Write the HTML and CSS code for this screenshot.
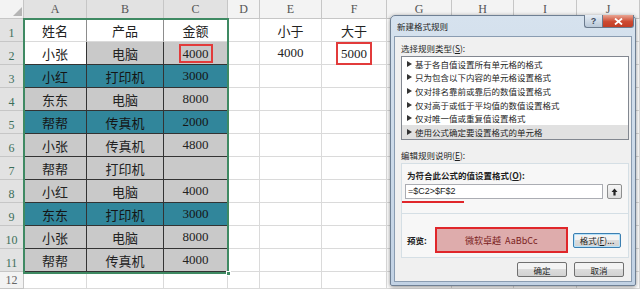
FILE: index.html
```html
<!DOCTYPE html>
<html lang="zh-CN">
<head>
	<meta charset="UTF-8">
	<title>新建格式规则</title>
	<link rel="stylesheet" href="styles.css">
</head>
<body>
	<div class="sheet">
		<div class="grid">
			<div class="corner"><span class="tri"></span></div>
			<div class="ch on">A</div><div class="ch on">B</div><div class="ch on">C</div><div class="ch">D</div><div class="ch">E</div><div class="ch">F</div><div class="ch">G</div><div class="ch">H</div><div class="ch">I</div><div class="ch">J</div>

			<div class="rh on">1</div><div class="c hd">姓名</div><div class="c hd">产品</div><div class="c hd">金额</div><div class="c"></div><div class="c">小于</div><div class="c">大于</div><div class="c"></div><div class="c"></div><div class="c"></div><div class="c"></div>

			<div class="rh on">2</div><div class="c w">小张</div><div class="c g">电脑</div><div class="c g"><span class="mark">4000</span></div><div class="c"></div><div class="c">4000</div><div class="c"><span class="mark big">5000</span></div><div class="c"></div><div class="c"></div><div class="c"></div><div class="c"></div>

			<div class="rh on">3</div><div class="c t">小红</div><div class="c t">打印机</div><div class="c t">3000</div><div class="c"></div><div class="c"></div><div class="c"></div><div class="c"></div><div class="c"></div><div class="c"></div><div class="c"></div>

			<div class="rh on">4</div><div class="c g">东东</div><div class="c g">电脑</div><div class="c g">8000</div><div class="c"></div><div class="c"></div><div class="c"></div><div class="c"></div><div class="c"></div><div class="c"></div><div class="c"></div>

			<div class="rh on">5</div><div class="c t">帮帮</div><div class="c t">传真机</div><div class="c t">2000</div><div class="c"></div><div class="c"></div><div class="c"></div><div class="c"></div><div class="c"></div><div class="c"></div><div class="c"></div>

			<div class="rh on">6</div><div class="c g">小张</div><div class="c g">传真机</div><div class="c g">4800</div><div class="c"></div><div class="c"></div><div class="c"></div><div class="c"></div><div class="c"></div><div class="c"></div><div class="c"></div>

			<div class="rh on">7</div><div class="c g">帮帮</div><div class="c g">打印机</div><div class="c g"></div><div class="c"></div><div class="c"></div><div class="c"></div><div class="c"></div><div class="c"></div><div class="c"></div><div class="c"></div>

			<div class="rh on">8</div><div class="c g">小红</div><div class="c g">电脑</div><div class="c g">4000</div><div class="c"></div><div class="c"></div><div class="c"></div><div class="c"></div><div class="c"></div><div class="c"></div><div class="c"></div>

			<div class="rh on">9</div><div class="c t">东东</div><div class="c t">打印机</div><div class="c t">3000</div><div class="c"></div><div class="c"></div><div class="c"></div><div class="c"></div><div class="c"></div><div class="c"></div><div class="c"></div>

			<div class="rh on">10</div><div class="c g">小张</div><div class="c g">电脑</div><div class="c g">8000</div><div class="c"></div><div class="c"></div><div class="c"></div><div class="c"></div><div class="c"></div><div class="c"></div><div class="c"></div>

			<div class="rh on">11</div><div class="c g">帮帮</div><div class="c g">传真机</div><div class="c g">4000</div><div class="c"></div><div class="c"></div><div class="c"></div><div class="c"></div><div class="c"></div><div class="c"></div><div class="c"></div>

			<div class="rh">12</div><div class="c"></div><div class="c"></div><div class="c"></div><div class="c"></div><div class="c"></div><div class="c"></div><div class="c"></div><div class="c"></div><div class="c"></div><div class="c"></div>
		</div>

		<!-- 选中区域 A1:C11 -->
		<div class="selection"><span class="handle"></span></div>

		<!-- 对话框 -->
		<div class="dialog">
			<div class="titlebar">新建格式规则</div>
			<div class="ctrls">
				<span class="help">?</span>
				<span class="close">
					<svg width="9" height="7" viewBox="0 0 9 7"><path d="M1 0.5 L8 6.5 M8 0.5 L1 6.5" stroke="#fff" stroke-width="1.8"/></svg>
				</span>
			</div>
			<div class="client">
				<div class="label">选择规则类型(<u>S</u>):</div>
				<div class="list">
					<div class="item"><i></i>基于各自值设置所有单元格的格式</div>
					<div class="item"><i></i>只为包含以下内容的单元格设置格式</div>
					<div class="item"><i></i>仅对排名靠前或靠后的数值设置格式</div>
					<div class="item"><i></i>仅对高于或低于平均值的数值设置格式</div>
					<div class="item"><i></i>仅对唯一值或重复值设置格式</div>
					<div class="item cur"><i></i>使用公式确定要设置格式的单元格</div>
				</div>
				<div class="label gap">编辑规则说明(<u>E</u>):</div>
				<div class="group">
					<div class="g-top">
						<div class="bold">为符合此公式的值设置格式(<u>O</u>):</div>
						<div class="formula">
							<div class="input">=$C2&gt;$F$2</div>
							<span class="pick">
								<svg width="7" height="8" viewBox="0 0 7 8"><path d="M3.5 0.5 L6.5 4 H4.6 V7.5 H2.4 V4 H0.5 Z" fill="#222"/></svg>
							</span>
						</div>
						<div class="redline"></div>
					</div>
					<div class="g-bottom">
						<span class="bold">预览:</span>
						<div class="preview">微软卓越 AaBbCc</div>
						<span class="btn def">格式(<u>F</u>)...</span>
					</div>
				</div>
				<div class="foot">
					<span class="btn">确定</span>
					<span class="btn">取消</span>
				</div>
			</div>
		</div>
	</div>
</body>
</html>
```

FILE: styles.css
```css
*{
	padding: 0;
	margin: 0;
	box-sizing: border-box;
}
body{
	width: 640px;
	height: 289px;
	overflow: hidden;
	background: #fff;
	font-family: "Liberation Serif", "Noto Sans CJK SC", serif;
}
.sheet{
	position: relative;
	width: 640px;
	height: 289px;
}

/* 表格网格 */
.grid{
	display: grid;
	grid-template-columns: 24px 63px 77px 64px 32px 62px 65px 65px 62px 63px 63px;
	grid-template-rows: 19px repeat(11, 23px) 17px;
}
.grid > div{
	display: flex;
	align-items: center;
	justify-content: center;
	border-right: 1px solid #dadada;
	border-bottom: 1px solid #dadada;
	font-size: 13px;
	color: #222;
	white-space: nowrap;
}
.corner{
	position: relative;
	background: #f3f3f3;
	border-color: #c6c6c6 !important;
}
.tri{
	position: absolute;
	right: 1px;
	bottom: 2px;
	width: 0;
	height: 0;
	border-left: 9px solid transparent;
	border-bottom: 9px solid #b5b5b5;
}
.ch{
	background: #f3f3f3;
	color: #555 !important;
	font-size: 12px !important;
	border-color: #c6c6c6 !important;
}
.ch.on{
	background: #e2e2e2;
	border-bottom: 1px solid #3f8a63 !important;
}
.rh{
	background: #f3f3f3;
	color: #666 !important;
	font-size: 12px !important;
	align-items: flex-end !important;
	padding-bottom: 1px;
	line-height: 14px;
	border-color: #c6c6c6 !important;
}
.rh.on{
	background: #e2e2e2;
	color: #3c6f5a !important;
}
.c.hd{
	border-right-color: #8d8d8d;
}
.c.w{
	background: #fff;
	border-color: #333;
}
.c.g{
	background: #c9c9c9;
	border-color: #333;
}
.c.t{
	background: #31869b;
	border-color: #333;
	color: #151515;
}
.mark{
	border: 2px solid #e23b3b;
	padding: 0 2px;
	line-height: 15px;
}
.mark.big{
	padding: 0 3px;
	line-height: 19px;
}

/* 选中框 */
.selection{
	position: absolute;
	left: 23px;
	top: 18px;
	width: 206px;
	height: 256px;
	border: 2px solid #3f8a63;
	pointer-events: none;
}
.handle{
	position: absolute;
	right: -4px;
	bottom: -4px;
	width: 5px;
	height: 5px;
	background: #3f8a63;
	border: 1px solid #fff;
}

/* 对话框 */
.dialog{
	position: absolute;
	left: 390px;
	top: 15px;
	width: 246px;
	height: 271px;
	padding: 0 3px 3px;
	background: linear-gradient(#d6e2ee, #c2d2e4);
	border: 1px solid #6f8094;
	border-radius: 5px 5px 2px 2px;
	box-shadow: 0 1px 4px rgba(0,0,0,0.45);
	font-family: "Noto Sans CJK SC", sans-serif;
	font-size: 8.5px;
	color: #1e1e1e;
}
.titlebar{
	height: 20px;
	line-height: 20px;
	padding-left: 3px;
}
.ctrls{
	position: absolute;
	top: -1px;
	right: 1px;
	display: flex;
}
.help, .close{
	display: flex;
	align-items: center;
	justify-content: center;
	height: 13px;
	border: 1px solid #6b7b8e;
	border-top: none;
}
.help{
	width: 18px;
	border-radius: 0 0 0 3px;
	border-right: none;
	background: linear-gradient(#e6edf5, #b9c8d8);
	font-family: "Liberation Sans", sans-serif;
	font-weight: bold;
	font-size: 9px;
	color: #3a4a5c;
}
.close{
	width: 32px;
	border-radius: 0 0 3px 0;
	background: linear-gradient(#e9a593, #cd4a31 55%, #c23d25);
}
.client{
	height: 246px;
	padding: 3px 2px 0 6px;
	background: #f0f0f0;
	border: 1px solid #8a9cb1;
}
.label{
	height: 16px;
	line-height: 16px;
}
.label.gap{
	margin-top: 7px;
}
.list{
	height: 84px;
	background: #fff;
	border: 1px solid #828790;
}
.item{
	height: 13.67px;
	display: flex;
	align-items: center;
	padding-left: 5px;
}
.item i{
	width: 0;
	height: 0;
	border-left: 5px solid #333;
	border-top: 3px solid transparent;
	border-bottom: 3px solid transparent;
	margin-right: 3px;
}
.item.cur{
	background: #e1e1e1;
}
.group{
	border: 1px solid #d5dfe5;
	background: #f7f7f7;
}
.g-top{
	position: relative;
	height: 50px;
	padding: 4px 6px 0 3px;
	border-bottom: 1px solid #d5dfe5;
}
.bold{
	font-weight: bold;
	line-height: 14px;
	padding-left: 2px;
}
.formula{
	display: flex;
	gap: 4px;
	margin-top: 2px;
}
.input{
	flex: 1;
	height: 15px;
	line-height: 13px;
	padding-left: 2px;
	background: #fff;
	border: 1px solid #abadb3;
	font-family: "Liberation Sans", sans-serif;
	font-size: 9px;
}
.pick{
	width: 15px;
	height: 15px;
	display: flex;
	align-items: center;
	justify-content: center;
	background: linear-gradient(#f6f6f6, #dedede);
	border: 1px solid #8e8f8f;
	border-radius: 2px;
}
.redline{
	width: 62px;
	height: 2px;
	margin: 2px 0 0 -3px;
	background: #e0262a;
}
.g-bottom{
	height: 43px;
	display: flex;
	align-items: center;
	padding: 13px 7px 4px 3px;
}
.preview{
	width: 133px;
	height: 26px;
	margin-left: 8px;
	display: flex;
	align-items: center;
	justify-content: center;
	background: #deacac;
	border: 2px solid #e0262a;
	color: #7a1d1d;
	font-size: 9px;
	word-spacing: 2px;
}
.btn{
	display: inline-flex;
	align-items: center;
	justify-content: center;
	height: 15px;
	width: 50px;
	background: linear-gradient(#f3f3f3 50%, #dcdcdc 50%, #d2d2d2);
	border: 1px solid #707070;
	border-radius: 2px;
}
.btn.def{
	width: 48px;
	margin-left: auto;
	border-color: #3c7fb1;
	box-shadow: inset 0 0 0 1px #b6e2fa;
}
.foot{
	display: flex;
	justify-content: flex-end;
	gap: 7px;
	margin-top: 4px;
	padding-right: 5px;
}
```
